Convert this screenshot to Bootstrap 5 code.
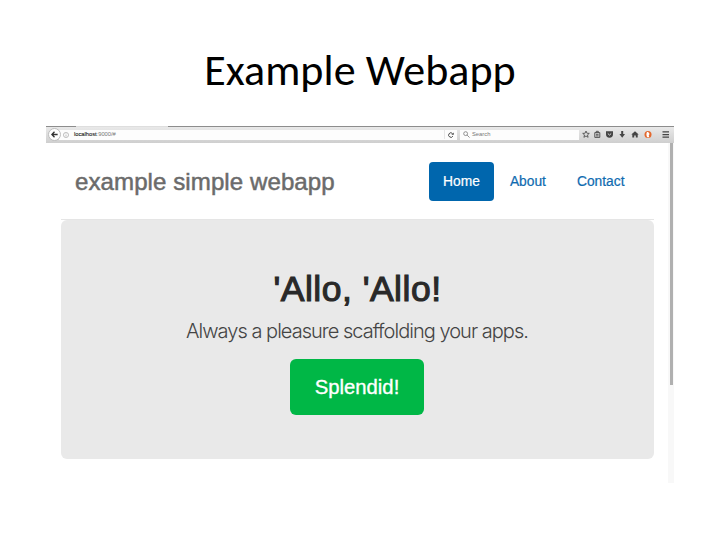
<!DOCTYPE html>
<html lang="en">
<head>
<meta charset="utf-8">
<meta name="viewport" content="width=device-width, initial-scale=1">
<title>Example Webapp</title>
<link href="https://cdn.jsdelivr.net/npm/bootstrap@5.3.0/dist/css/bootstrap.min.css" rel="stylesheet">
<style>
  body { background: #fff; font-family: "Liberation Sans", Arial, sans-serif; overflow: hidden; }
  .slide { width: 720px; height: 540px; padding: 0 46px; }
  .slide-title { height: 126px; padding-top: 45px; font: 400 44px/50px Carlito, Lato, sans-serif; letter-spacing: .05px; color: #000; }
  .browser { height: 357px; }
  .toolbar { height: 17px; background: linear-gradient(#e9e9e9, #cfcfcf); border-top: 1px solid #8d8d8d; font-size: 5.8px; line-height: 11px; }
  .tab-gap { width: 92px; height: 1px; margin: -1px 0 0 30px; background: #dedede; }
  .bar-row { height: 15px; padding-left: 2px; }
  .back { width: 13px; height: 13px; background: #fff; border: 1px solid #bdbdbd; z-index: 1; }
  .address { width: 398px; height: 10px; margin-left: -2px; padding-left: 4px; background: #fdfdfd; color: #333; }
  .address .host { color: #222; -webkit-text-stroke: .1px #222; }
  .address .port { color: #777; }
  .address .url { margin-left: 5px; letter-spacing: -.03px; }
  .reload { width: 13px; height: 9px; border-left: 1px solid #e6e6e6; }
  .search { width: 119px; height: 10px; margin-left: 3px; padding-left: 3px; background: #fdfdfd; color: #777; }
  .search span { margin-left: 2px; }
  .tools { margin-left: 3px; }
  .page-body { width: 622px; padding: 0 14px 0 15px; }
  .site-header { height: 77px; padding: 0 14px; border-bottom: 1px solid #e5e5e5; }
  .site-name { font-size: 24.1px; line-height: 30px; letter-spacing: .06px; color: #6b6b6b; -webkit-text-stroke: .5px #6b6b6b; padding-top: 2px; }
  .nav-pills { font-size: 13.8px; --bs-nav-pills-border-radius: 4px; --bs-nav-pills-link-active-bg: #0066ad; --bs-nav-link-color: #0f6bb0; }
  .nav-pills .nav-link { height: 39px; padding: 0 15px; line-height: 39px; -webkit-text-stroke: .2px currentColor; }
  .nav-pills .nav-link:not(.active) { padding: 0 15.5px; }
  .nav-pills .active { padding: 0 14.5px; }
  .hero { height: 239px; padding-top: 49px; background: #e9e9e9; border-radius: 6px; }
  .hero h1 { margin: 0; font-size: 35.5px; line-height: 40px; font-weight: 400; letter-spacing: .5px; color: #292929; -webkit-text-stroke: 1.1px #292929; }
  .hero p { margin: 7px 1px 0 0; font: 300 20px/30px Inter, sans-serif; letter-spacing: -.97px; color: #444; }
  .splendid { width: 134px; height: 56px; margin: 13px 1px 0 0; border-radius: 6px; background: #00b746; color: #fff; font-size: 20.3px; padding: 0; -webkit-text-stroke: .35px #fff; border: 0; }
  .scroll-track { width: 6px; height: 340px; background: #f8f8f8; padding-left: 2px; }
  .scroll-thumb { width: 3px; height: 242px; background: #b0b0b0; }
</style>
</head>
<body>
<main class="slide">
  <h2 class="slide-title text-center m-0">Example Webapp</h2>
  <section class="browser">
    <div class="toolbar">
      <div class="tab-gap"></div>
      <div class="bar-row d-flex align-items-center">
        <span class="back rounded-circle d-flex align-items-center justify-content-center flex-shrink-0">
          <svg width="7" height="7" viewBox="0 0 8 8" fill="none" stroke="#333" stroke-width="1.5"><path d="M4 .8 1 4l3 3.2M1 4h6.6"/></svg>
        </span>
        <div class="address d-flex align-items-center flex-shrink-0">
          <svg width="6" height="6" viewBox="0 0 8 8" fill="none" stroke="#999" stroke-width=".8"><circle cx="4" cy="4" r="3.4"/><path d="M4 3.5V6M4 2v.8"/></svg>
          <span class="url"><span class="host">localhost</span><span class="port">:9000/#</span></span>
          <span class="reload ms-auto d-flex align-items-center justify-content-center">
            <svg width="6" height="6" viewBox="0 0 8 8" fill="none" stroke="#444" stroke-width="1.3"><path d="M6.5 5.5A3 3 0 1 1 6 2"/><path d="M7.7.5v3.2H4.5z" fill="#444" stroke="none"/></svg>
          </span>
        </div>
        <div class="search d-flex align-items-center flex-shrink-0">
          <svg width="7" height="7" viewBox="0 0 8 8" fill="none" stroke="#777" stroke-width=".9"><circle cx="3" cy="3" r="2.2"/><path d="m4.7 4.7 2.8 2.8"/></svg>
          <span>Search</span>
        </div>
        <svg class="tools flex-shrink-0" width="90" height="9" viewBox="0 0 90 9" fill="#444">
          <path d="m4 1 .9 2.2 2.4.2-1.8 1.500.6 2.400L4 6 1.900 7.300l.6-2.400L.7 3.400l2.400-.2z" fill="none" stroke="#444" stroke-width=".8"/>
          <path d="M12.800 2.600h5v4.800h-5zM14.300 2.500V1.300h2v1.200M14 4.300h2.600M14 5.900h2.600" fill="none" stroke="#444" stroke-width=".9"/>
          <path d="M24 1.300h7v3a3.500 3.400 0 0 1-7 0z"/><path d="m25.800 3.500 1.700 1.600 1.700-1.600" fill="none" stroke="#eee" stroke-width=".9"/>
          <path d="M39.200 1h2v3H43l-2.800 3.800L37.400 4h1.800z"/>
          <path d="m53 1.200 3.700 3.400h-1v3h-1.900V5.500h-1.600v2.100h-1.900v-3h-1z"/>
          <circle cx="66" cy="4.500" r="3.500" fill="#e4682d"/><path d="M65 2c2.500 0 3 2.500 1.700 3.300l.6 2h-2.100c-.9-1.800-1.100-3.800-.2-5.300z" fill="#fff"/>
          <path d="M80.500 1.300h6.500v1.300h-6.500zM80.500 3.900h6.500v1.300h-6.500zM80.500 6.500h6.500v1.300h-6.500z"/>
        </svg>
      </div>
    </div>
    <div class="d-flex">
      <div class="page-body">
        <header class="site-header d-flex align-items-center justify-content-between">
          <div class="site-name">example simple webapp</div>
          <ul class="nav nav-pills">
            <li class="nav-item"><a class="nav-link active" href="#">Home</a></li>
            <li class="nav-item"><a class="nav-link" href="#">About</a></li>
            <li class="nav-item"><a class="nav-link" href="#">Contact</a></li>
          </ul>
        </header>
        <div class="hero text-center">
          <h1>'Allo, 'Allo!</h1>
          <p>Always a pleasure scaffolding your apps.</p>
          <a class="btn splendid d-inline-flex align-items-center justify-content-center" href="#">Splendid!</a>
        </div>
      </div>
      <div class="scroll-track"><div class="scroll-thumb"></div></div>
    </div>
  </section>
</main>
<script src="https://cdn.jsdelivr.net/npm/bootstrap@5.3.0/dist/js/bootstrap.bundle.min.js"></script>
</body>
</html>
